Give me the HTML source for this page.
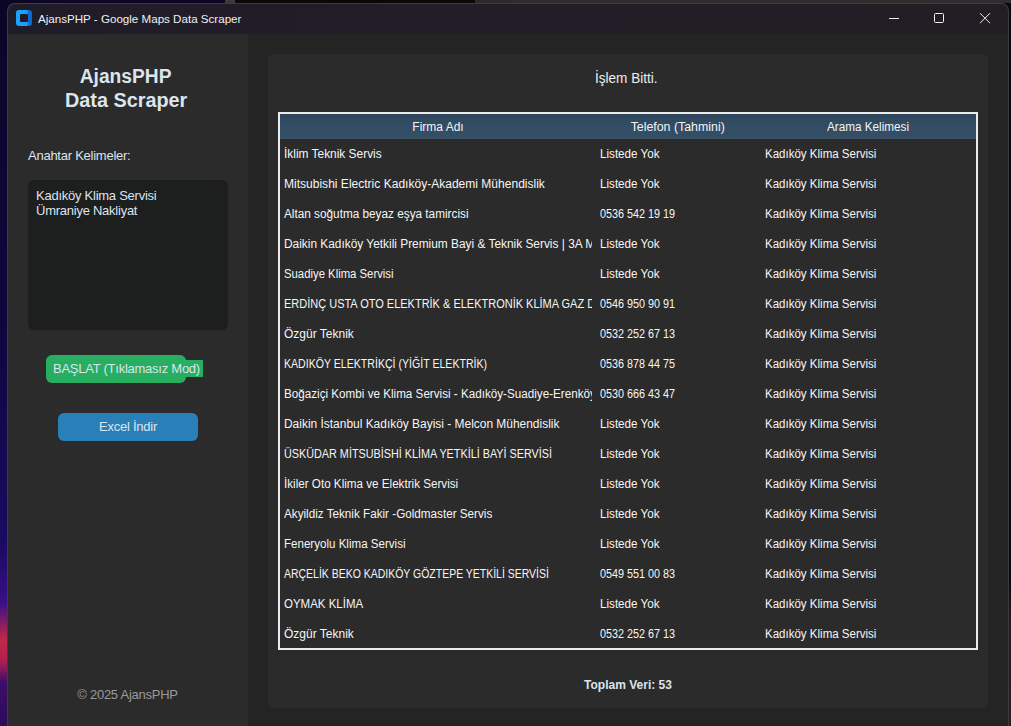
<!DOCTYPE html>
<html><head><meta charset="utf-8">
<style>
*{margin:0;padding:0;box-sizing:border-box}
html,body{width:1011px;height:726px;overflow:hidden;background:#0a0a0a;font-family:"Liberation Sans",sans-serif;position:relative}
.a{position:absolute;white-space:nowrap}
#win{position:absolute;left:7px;top:3px;width:1002px;height:740px;border-radius:8px 8px 0 0;background:linear-gradient(90deg,#3e3858,#3b3b3e 15%);overflow:hidden}
#tb{position:absolute;left:8px;top:4px;width:1000px;height:30px;background:linear-gradient(90deg,#1f1c29,#221d27 40%,#221e24);border-radius:7px 7px 0 0}
#side{position:absolute;left:8px;top:34px;width:240px;height:692px;background:#2b2b2b}
#mainbg{position:absolute;left:248px;top:34px;width:760px;height:692px;background:#242424}
#main{position:absolute;left:268px;top:54px;width:720px;height:654px;background:#2b2b2b;border-radius:6px}
#tbl{position:absolute;left:278px;top:112px;width:700px;height:538px;border:2px solid #ebebeb;background:#2b2b2b;overflow:hidden}
#hdr{position:absolute;left:0;top:0;width:696px;height:26px;background:linear-gradient(#2e465c,#324c63 40%,#344e65 85%,#3a5267 100%);border-bottom:1px solid #262b30}
#hdr div{position:absolute;top:1px;height:25px;line-height:25px;text-align:center;font-size:12px;color:#f4f4f4}
.r{position:absolute;left:0;width:696px;height:30px;font-size:12px;color:#f6f6f6}
.r div{position:absolute;top:0;height:30px;line-height:30px;overflow:hidden;white-space:nowrap}
.c1{left:4px;width:308px}
.r span{display:inline-block;transform-origin:0 50%}
.c2{left:320px;width:160px}
.c3{left:485px;width:210px}
</style></head><body>
<div class="a" style="left:225px;top:0;width:10px;height:3px;background:#3a3a3a"></div>
<div class="a" style="left:235px;top:0;width:240px;height:3px;background:#0a0907"></div>
<div class="a" style="left:475px;top:0;width:37px;height:3px;background:#2a2a2a"></div>
<div class="a" style="left:512px;top:0;width:499px;height:3px;background:#2e2e2e"></div>
<div class="a" style="left:0;top:3px;width:8px;height:723px;background:linear-gradient(#0c0526 0%,#10063e 45%,#1a0a62 75%,#3a0f86 83%,#c02848 88%,#b02050 91%,#3a0e6a 94%,#2e0a58 100%)"></div>
<div class="a" style="left:0;top:0;width:225px;height:20px;background:#0c0524"></div>
<div class="a" style="left:1008px;top:10px;width:3px;height:716px;background:linear-gradient(#0a0a0a 0%,#0a0a0a 80%,#2e1418 84%,#3a1a1e 100%)"></div>
<div id="win"></div>
<div class="a" style="left:7px;top:12px;width:1px;height:714px;background:#3e3658"></div>
<div id="tb"></div>
<div class="a" style="left:16px;top:10px;width:16px;height:16px;border-radius:3px;background:linear-gradient(90deg,#1ba4fc 0%,#1aa0fa 68%,#0c70d8 78%,#0a66cc 100%)"></div>
<div class="a" style="left:20px;top:14px;width:8px;height:8px;border-radius:1px;background:#24192c"></div>
<div class="a" style="left:38px;top:12px;font-size:11.6px;color:#f0f0f0">AjansPHP - Google Maps Data Scraper</div>
<svg class="a" style="left:880px;top:8px" width="120" height="20" viewBox="0 0 120 20">
 <path d="M9 10.5h10" stroke="#f0f0f0" stroke-width="1"/>
 <rect x="54.5" y="5.5" width="9" height="9" rx="1" fill="none" stroke="#f0f0f0" stroke-width="1"/>
 <path d="M100 5.2l10 10M110 5.2l-10 10" stroke="#f0f0f0" stroke-width="1"/>
</svg>
<div id="side"></div>
<div id="mainbg"></div>
<div class="a" style="left:6px;width:240px;top:65px;text-align:center;font-weight:bold;font-size:19.5px;line-height:23.5px;color:#dce4ee"><span style="display:inline-block;transform:scaleX(0.985)">AjansPHP</span><br><span style="display:inline-block;transform:scaleX(1.017)">Data Scraper</span></div>
<div class="a" style="left:28px;top:148px;font-size:13px;letter-spacing:-0.25px;color:#dce4ee">Anahtar Kelimeler:</div>
<div class="a" style="left:28px;top:180px;width:200px;height:150px;background:#1d1e1e;border-radius:6px"></div>
<div class="a" style="left:36px;top:188px;font-size:13px;letter-spacing:-0.25px;line-height:15px;color:#dce4ee">Kadıköy Klima Servisi<br>Ümraniye Nakliyat</div>
<div class="a" style="left:46px;top:355px;width:140px;height:28px;background:#27ae60;border-radius:6px"></div>
<div class="a" style="left:52px;top:360px;width:151px;height:17px;background:#27ae60"></div>
<div class="a" style="left:53px;top:360px;font-size:13px;letter-spacing:-0.25px;line-height:17px;color:#dce4ee">BAŞLAT (Tıklamasız Mod)</div>
<div class="a" style="left:58px;top:413px;width:140px;height:28px;background:#2980b9;border-radius:6px;font-size:13px;letter-spacing:-0.25px;line-height:28px;text-align:center;color:#dce4ee">Excel İndir</div>
<div class="a" style="left:8px;width:239px;top:687px;text-align:center;font-size:13px;letter-spacing:-0.25px;color:#9a9a9a">© 2025 AjansPHP</div>
<div id="main"></div>
<div class="a" style="left:266px;width:720px;top:70px;text-align:center;font-size:14px;color:#eeeeee"><span style="display:inline-block;transform:scaleX(0.97)">İşlem Bitti.</span></div>
<div id="tbl">
<div id="hdr"><div style="left:0;width:316px">Firma Adı</div><div style="left:316px;width:164px"><span style="display:inline-block;transform:scaleX(1.03)">Telefon (Tahmini)</span></div><div style="left:480px;width:216px"><span style="display:inline-block;transform:scaleX(0.976)">Arama Kelimesi</span></div></div>
<div class="r" style="top:25px"><div class="c1"><span style="transform:scaleX(0.992)">İklim Teknik Servis</span></div><div class="c2"><span style="transform:scaleX(0.97)">Listede Yok</span></div><div class="c3"><span style="transform:scaleX(0.96)">Kadıköy Klima Servisi</span></div></div>
<div class="r" style="top:55px"><div class="c1"><span style="transform:scaleX(1.003)">Mitsubishi Electric Kadıköy-Akademi Mühendislik</span></div><div class="c2"><span style="transform:scaleX(0.97)">Listede Yok</span></div><div class="c3"><span style="transform:scaleX(0.96)">Kadıköy Klima Servisi</span></div></div>
<div class="r" style="top:85px"><div class="c1"><span style="transform:scaleX(0.981)">Altan soğutma beyaz eşya tamircisi</span></div><div class="c2"><span style="transform:scaleX(0.9)">0536 542 19 19</span></div><div class="c3"><span style="transform:scaleX(0.96)">Kadıköy Klima Servisi</span></div></div>
<div class="r" style="top:115px"><div class="c1"><span style="transform:scaleX(0.99)">Daikin Kadıköy Yetkili Premium Bayi &amp; Teknik Servis | 3A Mühendislik</span></div><div class="c2"><span style="transform:scaleX(0.97)">Listede Yok</span></div><div class="c3"><span style="transform:scaleX(0.96)">Kadıköy Klima Servisi</span></div></div>
<div class="r" style="top:145px"><div class="c1"><span style="transform:scaleX(0.944)">Suadiye Klima Servisi</span></div><div class="c2"><span style="transform:scaleX(0.97)">Listede Yok</span></div><div class="c3"><span style="transform:scaleX(0.96)">Kadıköy Klima Servisi</span></div></div>
<div class="r" style="top:175px"><div class="c1"><span style="transform:scaleX(0.916)">ERDİNÇ USTA OTO ELEKTRİK &amp; ELEKTRONİK KLİMA GAZ DOLUM</span></div><div class="c2"><span style="transform:scaleX(0.9)">0546 950 90 91</span></div><div class="c3"><span style="transform:scaleX(0.96)">Kadıköy Klima Servisi</span></div></div>
<div class="r" style="top:205px"><div class="c1"><span style="transform:scaleX(1.0)">Özgür Teknik</span></div><div class="c2"><span style="transform:scaleX(0.9)">0532 252 67 13</span></div><div class="c3"><span style="transform:scaleX(0.96)">Kadıköy Klima Servisi</span></div></div>
<div class="r" style="top:235px"><div class="c1"><span style="transform:scaleX(0.882)">KADIKÖY ELEKTRİKÇİ (YİĞİT ELEKTRİK)</span></div><div class="c2"><span style="transform:scaleX(0.9)">0536 878 44 75</span></div><div class="c3"><span style="transform:scaleX(0.96)">Kadıköy Klima Servisi</span></div></div>
<div class="r" style="top:265px"><div class="c1"><span style="transform:scaleX(0.972)">Boğaziçi Kombi ve Klima Servisi - Kadıköy-Suadiye-Erenköy</span></div><div class="c2"><span style="transform:scaleX(0.9)">0530 666 43 47</span></div><div class="c3"><span style="transform:scaleX(0.96)">Kadıköy Klima Servisi</span></div></div>
<div class="r" style="top:295px"><div class="c1"><span style="transform:scaleX(0.995)">Daikin İstanbul Kadıköy Bayisi - Melcon Mühendislik</span></div><div class="c2"><span style="transform:scaleX(0.97)">Listede Yok</span></div><div class="c3"><span style="transform:scaleX(0.96)">Kadıköy Klima Servisi</span></div></div>
<div class="r" style="top:325px"><div class="c1"><span style="transform:scaleX(0.901)">ÜSKÜDAR MİTSUBİSHİ KLİMA YETKİLİ BAYİ SERVİSİ</span></div><div class="c2"><span style="transform:scaleX(0.97)">Listede Yok</span></div><div class="c3"><span style="transform:scaleX(0.96)">Kadıköy Klima Servisi</span></div></div>
<div class="r" style="top:355px"><div class="c1"><span style="transform:scaleX(0.971)">İkiler Oto Klima ve Elektrik Servisi</span></div><div class="c2"><span style="transform:scaleX(0.97)">Listede Yok</span></div><div class="c3"><span style="transform:scaleX(0.96)">Kadıköy Klima Servisi</span></div></div>
<div class="r" style="top:385px"><div class="c1"><span style="transform:scaleX(0.974)">Akyildiz Teknik Fakir -Goldmaster Servis</span></div><div class="c2"><span style="transform:scaleX(0.97)">Listede Yok</span></div><div class="c3"><span style="transform:scaleX(0.96)">Kadıköy Klima Servisi</span></div></div>
<div class="r" style="top:415px"><div class="c1"><span style="transform:scaleX(0.964)">Feneryolu Klima Servisi</span></div><div class="c2"><span style="transform:scaleX(0.97)">Listede Yok</span></div><div class="c3"><span style="transform:scaleX(0.96)">Kadıköy Klima Servisi</span></div></div>
<div class="r" style="top:445px"><div class="c1"><span style="transform:scaleX(0.873)">ARÇELİK BEKO KADIKÖY GÖZTEPE YETKİLİ SERVİSİ</span></div><div class="c2"><span style="transform:scaleX(0.9)">0549 551 00 83</span></div><div class="c3"><span style="transform:scaleX(0.96)">Kadıköy Klima Servisi</span></div></div>
<div class="r" style="top:475px"><div class="c1"><span style="transform:scaleX(0.957)">OYMAK KLİMA</span></div><div class="c2"><span style="transform:scaleX(0.97)">Listede Yok</span></div><div class="c3"><span style="transform:scaleX(0.96)">Kadıköy Klima Servisi</span></div></div>
<div class="r" style="top:505px"><div class="c1"><span style="transform:scaleX(1.0)">Özgür Teknik</span></div><div class="c2"><span style="transform:scaleX(0.9)">0532 252 67 13</span></div><div class="c3"><span style="transform:scaleX(0.96)">Kadıköy Klima Servisi</span></div></div>

</div>
<div class="a" style="left:268px;width:720px;top:678px;text-align:center;font-size:12px;font-weight:bold;color:#dce4ee">Toplam Veri: 53</div>
</body></html>
